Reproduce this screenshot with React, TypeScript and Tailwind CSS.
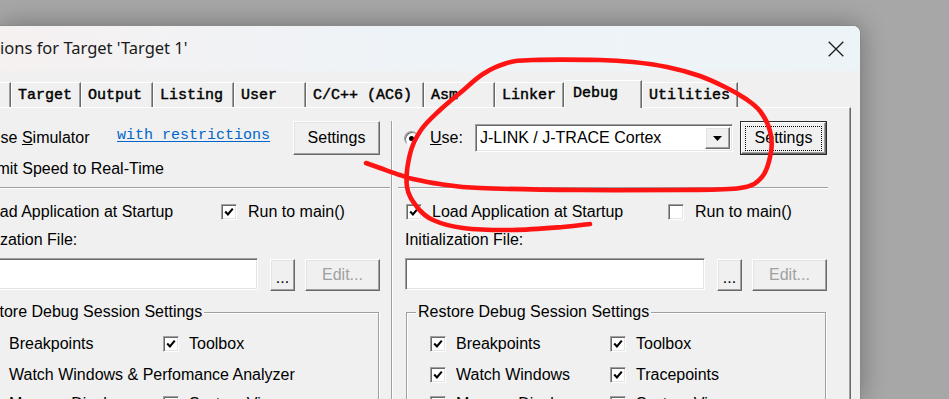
import React from "react";

const SANS = "font-['Liberation_Sans',Arial,sans-serif]";
const MONO = "font-['Liberation_Mono','Courier_New',monospace]";

function smooth(pts: number[][]) {
  let d = `M${pts[0][0]} ${pts[0][1]}`;
  for (let i = 0; i < pts.length - 1; i++) {
    const p0 = pts[i - 1] || pts[i];
    const p1 = pts[i];
    const p2 = pts[i + 1];
    const p3 = pts[i + 2] || p2;
    const c1x = p1[0] + (p2[0] - p0[0]) / 6;
    const c1y = p1[1] + (p2[1] - p0[1]) / 6;
    const c2x = p2[0] - (p3[0] - p1[0]) / 6;
    const c2y = p2[1] - (p3[1] - p1[1]) / 6;
    d += ` C${c1x.toFixed(1)} ${c1y.toFixed(1)} ${c2x.toFixed(1)} ${c2y.toFixed(1)} ${p2[0]} ${p2[1]}`;
  }
  return d;
}

const INK = [
  [366, 163], [380, 168], [400, 175], [413, 179], [440, 184], [480, 188], [580, 190], [680, 190], [740, 188],
  [762, 177], [771, 152], [770, 131], [760, 111], [746, 99], [727, 88], [700, 76], [667, 67], [633, 62],
  [600, 60], [533, 60], [507, 63], [483, 74], [460, 93], [440, 110], [421, 130], [410, 154], [407, 187],
  [417, 207], [433, 220], [463, 228], [513, 230], [563, 227], [590, 224],
];

function Check() {
  return (
    <svg width="10" height="10" viewBox="0 0 10 10">
      <path d="M1.2 4.6 L3.9 7.4 L8.8 1.6" fill="none" stroke="#000" strokeWidth="2.1" />
    </svg>
  );
}

function Checkbox({ checked }: { checked?: boolean }) {
  return (
    <div className="w-[16px] h-[16px] shrink-0 bg-white border border-t-[#a0a0a0] border-l-[#a0a0a0] border-b-white border-r-white shadow-[inset_1px_1px_0_#696969,inset_-1px_-1px_0_#e3e3e3] flex items-center justify-center">
      {checked && <Check />}
    </div>
  );
}

function Radio({ checked }: { checked?: boolean }) {
  return (
    <div className="w-[15px] h-[15px] shrink-0 rounded-full bg-white border border-t-[#a0a0a0] border-l-[#a0a0a0] border-b-white border-r-white shadow-[inset_1px_1px_0_#696969] flex items-center justify-center">
      {checked && <div className="w-[5px] h-[5px] rounded-full bg-black" />}
    </div>
  );
}

function Btn({ children, className = "" }: { children?: React.ReactNode; className?: string }) {
  return (
    <div
      className={`shrink-0 flex items-center justify-center bg-[#f0f0f0] border border-t-white border-l-white border-b-[#696969] border-r-[#696969] shadow-[inset_-1px_-1px_0_#a0a0a0,inset_1px_1px_0_#e3e3e3] ${className}`}
    >
      {children}
    </div>
  );
}

function DefaultBtn() {
  return (
    <div className="w-[87px] h-[34px] shrink-0 border border-[#2a2a2a] flex">
      <div className="flex-1 flex items-center justify-center bg-[#f0f0f0] border border-t-white border-l-white border-b-[#696969] border-r-[#696969] shadow-[inset_-1px_-1px_0_#a0a0a0]">
        <div className="w-[77px] h-[25px] border border-dotted border-black flex items-center justify-center">Settings</div>
      </div>
    </div>
  );
}

function Select() {
  return (
    <div className="w-[258px] h-[28px] shrink-0 bg-white border border-t-[#a0a0a0] border-l-[#a0a0a0] border-b-white border-r-white shadow-[inset_1px_1px_0_#696969,inset_-1px_-1px_0_#e3e3e3] flex items-stretch p-[2px]">
      <div className="flex-1 pl-[2px] flex items-center">J-LINK / J-TRACE Cortex</div>
      <Btn className="w-[25px]">
        <svg width="9" height="5" viewBox="0 0 9 5">
          <path d="M0 0 H9 L4.5 5 Z" fill="#000" />
        </svg>
      </Btn>
    </div>
  );
}

function Field({ className = "" }: { className?: string }) {
  return (
    <div
      className={`shrink-0 bg-white border border-t-[#a0a0a0] border-l-[#a0a0a0] border-b-white border-r-white shadow-[inset_1px_1px_0_#696969,inset_-1px_-1px_0_#e3e3e3] ${className}`}
    />
  );
}

function Pair({
  a,
  ac,
  b,
  bc,
  wFirst = "w-[180px]",
}: {
  a: string;
  ac?: boolean;
  b?: string;
  bc?: boolean;
  wFirst?: string;
}) {
  return (
    <>
      <div className={`${wFirst} shrink-0 flex items-center`}>
        <Checkbox checked={ac} />
        <span className="ml-[10px] whitespace-nowrap">{a}</span>
      </div>
      {b && (
        <div className="flex items-center">
          <Checkbox checked={bc} />
          <span className="ml-[10px] whitespace-nowrap">{b}</span>
        </div>
      )}
    </>
  );
}

function Column({ sim }: { sim: boolean }) {
  return (
    <div className={`w-[430px] shrink-0 flex flex-col ${SANS} text-[16px] leading-[20px] text-black`}>
      {/* Row 1 */}
      <div className="h-[34px] flex items-center">
        {sim ? (
          <>
            <div className="w-[38px] shrink-0 flex pl-[6px]">
              <Radio />
            </div>
            <div className="w-[128px] shrink-0 whitespace-nowrap">
              Use <span className="underline">S</span>imulator
            </div>
            <div className={`w-[176px] shrink-0 ${MONO} text-[15px] text-[#0066cc] underline underline-offset-2 mb-[5px]`}>
              with restrictions
            </div>
            <Btn className="w-[87px] h-[34px]">Settings</Btn>
          </>
        ) : (
          <>
            <div className="w-[32px] shrink-0 flex pl-[6px]">
              <Radio checked />
            </div>
            <div className="w-[45px] shrink-0">
              <span className="underline">U</span>se:
            </div>
            <Select />
            <div className="ml-[7px]">
              <DefaultBtn />
            </div>
          </>
        )}
      </div>

      {/* Row 2 */}
      <div className="mt-[4px] h-[20px] flex items-center">
        {sim && (
          <>
            <div className="ml-[5px]">
              <Checkbox checked />
            </div>
            <span className="ml-[12px] whitespace-nowrap">Limit Speed to Real-Time</span>
          </>
        )}
      </div>

      {/* Etched line */}
      <div
        className={`mt-[8px] h-[2px] border-t border-b border-t-[#a0a0a0] border-b-white ${sim ? "mr-[-9px]" : ""}`}
      />

      {/* Row 3 */}
      <div className="mt-[13px] h-[20px] flex items-center">
        <div className={`w-[270px] shrink-0 flex items-center ${sim ? "pl-[5px]" : "pl-[8px]"}`}>
          <Checkbox checked />
          <span className="ml-[10px] whitespace-nowrap">Load Application at Startup</span>
        </div>
        <Checkbox checked={sim} />
        <span className="ml-[11px] whitespace-nowrap">Run to main()</span>
      </div>

      {/* Row 4 */}
      <div className={`mt-[8px] h-[20px] flex items-center whitespace-nowrap ${sim ? "pl-[8px]" : "pl-[7px]"}`}>
        Initialization File:
      </div>

      {/* Row 5 */}
      <div className="mt-[8px] flex items-start">
        <Field className="ml-[7px] w-[300px] h-[32px]" />
        <Btn className="ml-[12px] mt-[1px] w-[25px] h-[32px] items-end pb-[7px]">
          <span className="leading-[10px]">...</span>
        </Btn>
        <Btn className="ml-[10px] mt-[1px] w-[75px] h-[32px] text-[#a0a0a0]">Edit...</Btn>
      </div>

      {/* Group */}
      <fieldset className="mt-[11px] ml-[8px] w-[420px] h-[160px] border border-[#a0a0a0] shadow-[inset_1px_1px_0_#ffffff,1px_1px_0_#ffffff]">
        <legend className="ml-[9px] px-[2px] leading-[20px] bg-[#f0f0f0] whitespace-nowrap">
          Restore Debug Session Settings
        </legend>
        <div className="pl-[23px] mt-[12px] h-[20px] flex items-center">
          <Pair a="Breakpoints" ac b="Toolbox" bc />
        </div>
        <div className="pl-[23px] mt-[11px] h-[20px] flex items-center">
          {sim ? (
            <Pair a="Watch Windows & Perfomance Analyzer" ac wFirst="w-[360px]" />
          ) : (
            <Pair a="Watch Windows" ac b="Tracepoints" bc />
          )}
        </div>
        <div className="pl-[23px] mt-[9px] h-[20px] flex items-center">
          <Pair a="Memory Display" ac b="System Viewer" bc />
        </div>
      </fieldset>
    </div>
  );
}

const TABS: { label: string; cls: string; sel?: boolean }[] = [
  { label: "Device", cls: "ml-[-70px] w-[81px]" },
  { label: "Target", cls: "w-[70px]" },
  { label: "Output", cls: "w-[72px]" },
  { label: "Listing", cls: "w-[81px]" },
  { label: "User", cls: "w-[72px]" },
  { label: "C/C++ (AC6)", cls: "w-[118px]" },
  { label: "Asm", cls: "w-[71px]" },
  { label: "Linker", cls: "w-[69px]" },
  { label: "Debug", cls: "w-[78px]", sel: true },
  { label: "Utilities", cls: "w-[96px]" },
];

function Tabs() {
  return (
    <div
      className={`mt-[9px] h-[27px] flex items-end ${MONO} text-[15px] text-black [-webkit-text-stroke:0.45px_#000]`}
    >
      {TABS.map((t) =>
        t.sel ? (
          <div
            key={t.label}
            className={`${t.cls} shrink-0 h-[28px] mb-[-1px] relative z-10 bg-[#f0f0f0] border-t border-l border-t-white border-l-white border-r border-r-[#696969] shadow-[inset_-1px_0_0_#a0a0a0] rounded-tl-[2px] flex items-center pl-[8px] pb-[1px] whitespace-pre`}
          >
            {t.label}
          </div>
        ) : (
          <div
            key={t.label}
            className={`${t.cls} shrink-0 h-[25px] bg-[#f0f0f0] border-t border-l border-t-white border-l-white border-r border-r-[#696969] shadow-[inset_-1px_0_0_#a0a0a0] rounded-tl-[2px] flex items-center pl-[6px] pt-[3px] whitespace-pre`}
          >
            {t.label}
          </div>
        )
      )}
    </div>
  );
}

export default function App() {
  return (
    <div className="w-[949px] h-[399px] overflow-hidden bg-[#a7a7a7] pt-[25px] relative">
      <div className="w-[861px] h-[374px] overflow-hidden rounded-tr-[8px] border-t border-r border-[#8a8a8a] shadow-[0_0_26px_rgba(0,0,0,0.32)] bg-[#f0f0f0] flex flex-col">
        {/* Title bar */}
        <div className="h-[45px] shrink-0 flex items-center bg-[linear-gradient(90deg,#f6f1f1,#eef3f7_45%,#edf4f8)] font-['Noto_Sans','Open_Sans',sans-serif] text-[16.5px] text-[#1a1a1a]">
          <span className="w-[40px] ml-[-40px] text-right shrink-0">Opt</span>
          <span className="whitespace-nowrap">ions for Target 'Target 1'</span>
          <div className="ml-auto mr-[16px] flex items-center">
            <svg width="16" height="16" viewBox="0 0 16 16">
              <path d="M0.7 0.7 L15.3 15.3 M15.3 0.7 L0.7 15.3" stroke="#1b1b1b" strokeWidth="1.3" />
            </svg>
          </div>
        </div>

        {/* Body */}
        <div className="flex-1 flex flex-col">
          <Tabs />
          <div className="w-[851px] flex-1 border-t border-t-white border-r border-r-[#696969] shadow-[inset_-1px_0_0_#a0a0a0]">
            <div className="ml-[-49px] pt-[13px] flex items-stretch">
              <Column sim />
              <div className="ml-[10px] w-[2px] shrink-0 border-l border-l-[#a0a0a0] border-r border-r-white" />
              <div className="ml-[5px]">
                <Column sim={false} />
              </div>
            </div>
          </div>
        </div>
      </div>

      {/* Red hand-drawn annotation */}
      <svg
        className="absolute left-0 top-0 pointer-events-none"
        width="949"
        height="399"
        viewBox="0 0 949 399"
      >
        <path
          d={smooth(INK)}
          fill="none"
          stroke="#ff1414"
          strokeWidth="4.6"
          strokeLinecap="round"
          strokeLinejoin="round"
        />
      </svg>
    </div>
  );
}
